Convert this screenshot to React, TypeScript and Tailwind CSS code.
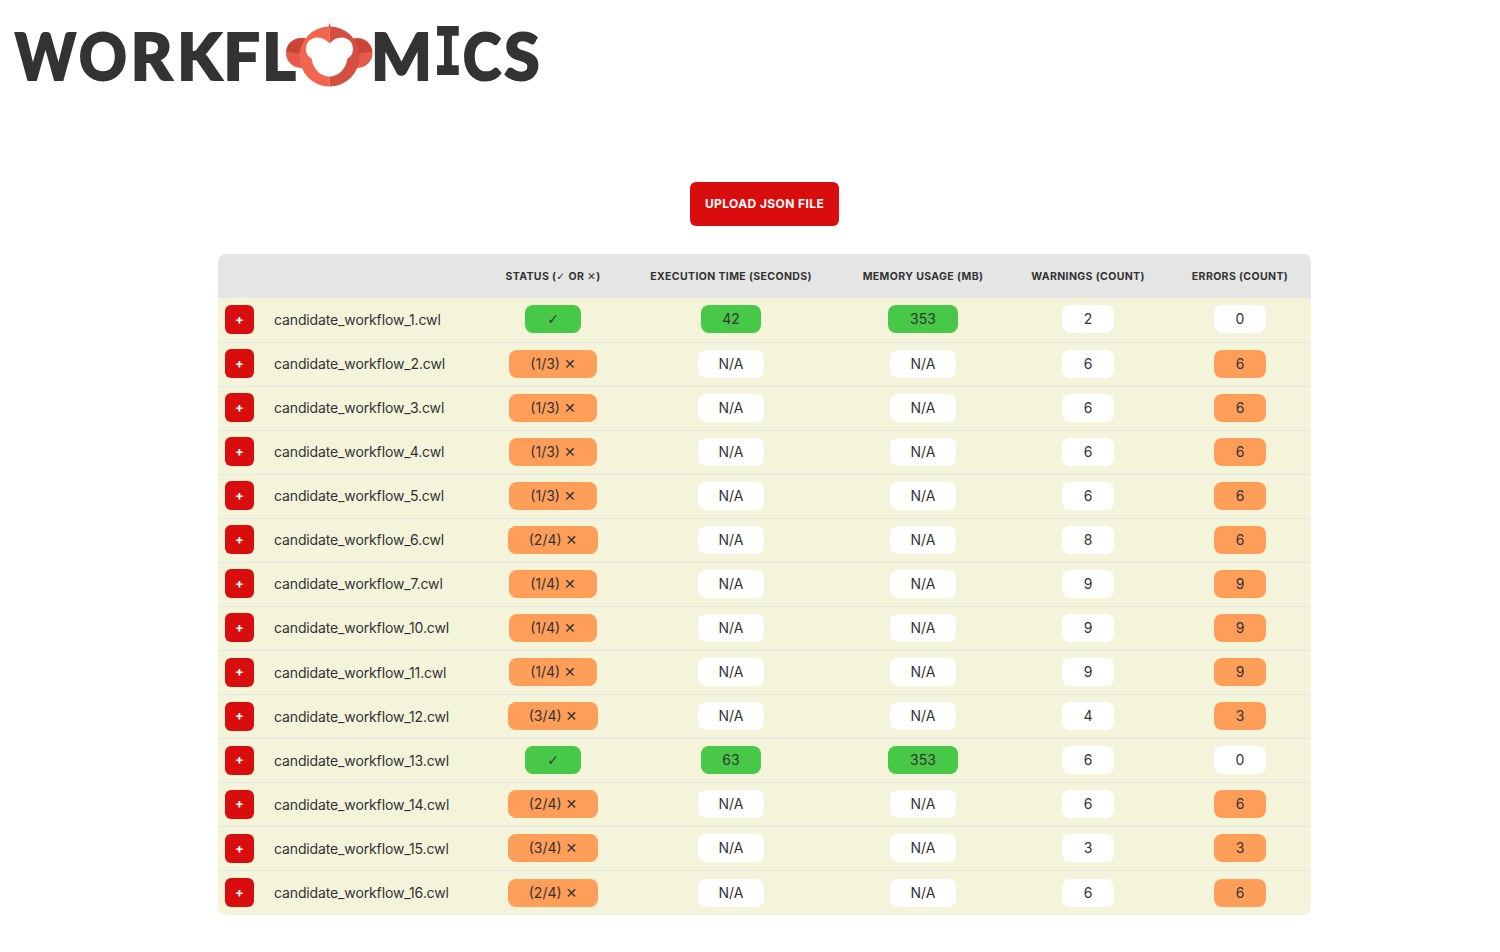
const FONT = "font-['Inter','Liberation_Sans','DejaVu_Sans',sans-serif]";

type Tone = "green" | "orange" | "white";
const tones: Record<Tone, string> = {
  green: "bg-[#47c947]",
  orange: "bg-[#ff9e59]",
  white: "bg-white",
};

function pillWidth(text: string) {
  if (text === "N/A") return "w-[66px]";
  if (text === "✓") return "w-[56px]";
  if (text === "353") return "w-[70px]";
  if (text.length === 2) return "w-[60px]";
  if (text.startsWith("(1/")) return "w-[88px]";
  if (text.startsWith("(")) return "w-[90px]";
  return "w-[52px]";
}

function Mark({ children }: { children: string }) {
  return <span className="font-['DejaVu_Sans',sans-serif] font-normal">{children}</span>;
}

function Pill({ tone, children }: { tone: Tone; children: string }) {
  const isStatus = children === "✓" || children.endsWith("✕");
  return (
    <span className={`inline-flex h-[28px] items-center justify-center whitespace-pre rounded-[8px] align-middle text-[14px] leading-[28px] text-[#333333] ${pillWidth(children)} ${tones[tone]}`}>
      {isStatus ? (
        children === "✓" ? <Mark>✓</Mark> : <>{children.slice(0, 6)}<Mark>✕</Mark></>
      ) : (
        children
      )}
    </span>
  );
}

function Monkey() {
  return (
    <svg width="90" height="70" viewBox="0 0 90 70" className="shrink-0" aria-hidden="true">
      <g transform="translate(-285 -20)">
        <circle cx="301" cy="53" r="15" fill="#e65a4b" />
        <path d="M286.1 51.5A15 15 0 0 1 312 43L308 55Z" fill="#cc4436" />
        <circle cx="357.5" cy="53" r="15" fill="#e65a4b" />
        <path d="M372.4 51.5A15 15 0 0 0 347 43L350 55Z" fill="#cc4436" />
        <path d="M329.5 26.5A30 30 0 0 0 329.5 86.5Z" fill="#f2664f" />
        <path d="M329.5 26.5A30 30 0 0 1 329.5 86.5Z" fill="#d44f3f" />
        <path d="M329.5 23L328 28H331Z" fill="#f2664f" />
        <path d="M329.5 23L331 28H329.5Z" fill="#d44f3f" />
        <path d="M329.5 43.5C326 39.5 322 37.5 317.5 37.5C310.5 37.5 306 42.5 306 49C306 54 308.5 57 311.5 58.5C313 68.5 320 76.5 329.5 76.5C339 76.5 346 68.5 347.5 58.5C350.5 57 353 54 353 49C353 42.5 348.5 37.5 341.5 37.5C337 37.5 333 39.5 329.5 43.5Z" fill="#ffffff" />
      </g>
    </svg>
  );
}

const rows: [string, Tone, string, string, string, string, string][] = [
  ["1", "green", "✓", "42", "353", "2", "0"],
  ["2", "orange", "(1/3) ✕", "N/A", "N/A", "6", "6"],
  ["3", "orange", "(1/3) ✕", "N/A", "N/A", "6", "6"],
  ["4", "orange", "(1/3) ✕", "N/A", "N/A", "6", "6"],
  ["5", "orange", "(1/3) ✕", "N/A", "N/A", "6", "6"],
  ["6", "orange", "(2/4) ✕", "N/A", "N/A", "8", "6"],
  ["7", "orange", "(1/4) ✕", "N/A", "N/A", "9", "9"],
  ["10", "orange", "(1/4) ✕", "N/A", "N/A", "9", "9"],
  ["11", "orange", "(1/4) ✕", "N/A", "N/A", "9", "9"],
  ["12", "orange", "(3/4) ✕", "N/A", "N/A", "4", "3"],
  ["13", "green", "✓", "63", "353", "6", "0"],
  ["14", "orange", "(2/4) ✕", "N/A", "N/A", "6", "6"],
  ["15", "orange", "(3/4) ✕", "N/A", "N/A", "3", "3"],
  ["16", "orange", "(2/4) ✕", "N/A", "N/A", "6", "6"],
];

const headers = ["Execution Time (seconds)", "Memory Usage (MB)", "Warnings (count)"];
const thClass = "whitespace-nowrap pt-[1px] text-center text-[10.5px] font-bold tracking-[0.38px] text-[#333333] uppercase";

const logoLeft: [string, string][] = [
  ["W", "w-[59px] scale-x-[0.9]"],
  ["O", "w-[56px] scale-x-[0.92]"],
  ["R", "w-[41px]"],
  ["K", "w-[55px]"],
  ["F", "w-[29px]"],
  ["L", "w-[46px]"],
];

function LogoLetter({ c, w }: { c: string; w: string }) {
  return <span className={`flex justify-center ${w}`}>{c}</span>;
}

export default function App() {
  return (
    <div className={`min-h-[952px] bg-white text-[#333333] ${FONT}`}>
      <header className="flex h-[110px] items-start pl-[16px] pt-[21px]">
        <div className="flex items-center font-['Lato','Liberation_Sans',sans-serif] text-[64px] font-black leading-[70px] text-[#333333] [-webkit-text-stroke:2px_#333333]">
          {logoLeft.map(([c, w]) => <LogoLetter key={c} c={c} w={w} />)}
          <span className="-ml-[17px] -mr-[3px] flex -translate-y-[1px]"><Monkey /></span>
          <LogoLetter c="M" w="w-[59px]" />
          <LogoLetter c="I" w="w-[34px] scale-x-[0.65] font-['Liberation_Mono',monospace] text-[70px]" />
          <LogoLetter c="C" w="w-[34px] scale-x-[0.9]" />
          <LogoLetter c="S" w="w-[46px]" />
        </div>
      </header>

      <div className="pl-[29px]">
        <div className="flex justify-center pt-[72px]">
          <button className="h-[44px] w-[149px] rounded-[6px] bg-[#d90d0d] text-[12px] font-bold tracking-[0.4px] text-white uppercase">
            Upload JSON file
          </button>
        </div>

        <div className="mx-auto mt-[28px] w-[1093px] overflow-hidden rounded-[8px]">
          <table className="w-full table-fixed border-collapse bg-[#f4f4db] text-[14px]">
            <colgroup>
              <col className="w-[261px]" />
              <col className="w-[148px]" />
              <col className="w-[208px]" />
              <col className="w-[176px]" />
              <col className="w-[154px]" />
              <col className="w-[146px]" />
            </colgroup>
            <thead>
              <tr className="h-[44px] bg-[#e5e5e5]">
                <th />
                <th className={thClass}>Status (<Mark>✓</Mark> or <Mark>✕</Mark>)</th>
                {headers.map((h) => (
                  <th key={h} className={thClass}>{h}</th>
                ))}
                <th className={`${thClass} pl-[4px]`}>Errors (count)</th>
              </tr>
            </thead>
            <tbody>
              {rows.map(([id, tone, status, time, memory, warnings, errors], i) => (
                <tr key={id} className={`h-[44.07px] ${i === rows.length - 1 ? "" : "border-b border-[#e5e5e5]"}`}>
                  <td className="p-0 pb-[1px] pl-[7px]">
                    <div className="flex items-center">
                      <button className="flex h-[29px] w-[29px] shrink-0 items-center justify-center rounded-[6px] bg-[#d90d0d] text-[13px] font-bold text-white">+</button>
                      <span className="ml-[20px] whitespace-nowrap tracking-[-0.13px]">candidate_workflow_{id}.cwl</span>
                    </div>
                  </td>
                  <td className="p-0 pb-[1px] text-center"><Pill tone={tone}>{status}</Pill></td>
                  <td className="p-0 pb-[1px] text-center"><Pill tone={time === "N/A" ? "white" : "green"}>{time}</Pill></td>
                  <td className="p-0 pb-[1px] text-center"><Pill tone={memory === "N/A" ? "white" : "green"}>{memory}</Pill></td>
                  <td className="p-0 pb-[1px] text-center"><Pill tone="white">{warnings}</Pill></td>
                  <td className="p-0 pb-[1px] pl-[4px] text-center"><Pill tone={errors === "0" ? "white" : "orange"}>{errors}</Pill></td>
                </tr>
              ))}
            </tbody>
          </table>
        </div>
      </div>
    </div>
  );
}
